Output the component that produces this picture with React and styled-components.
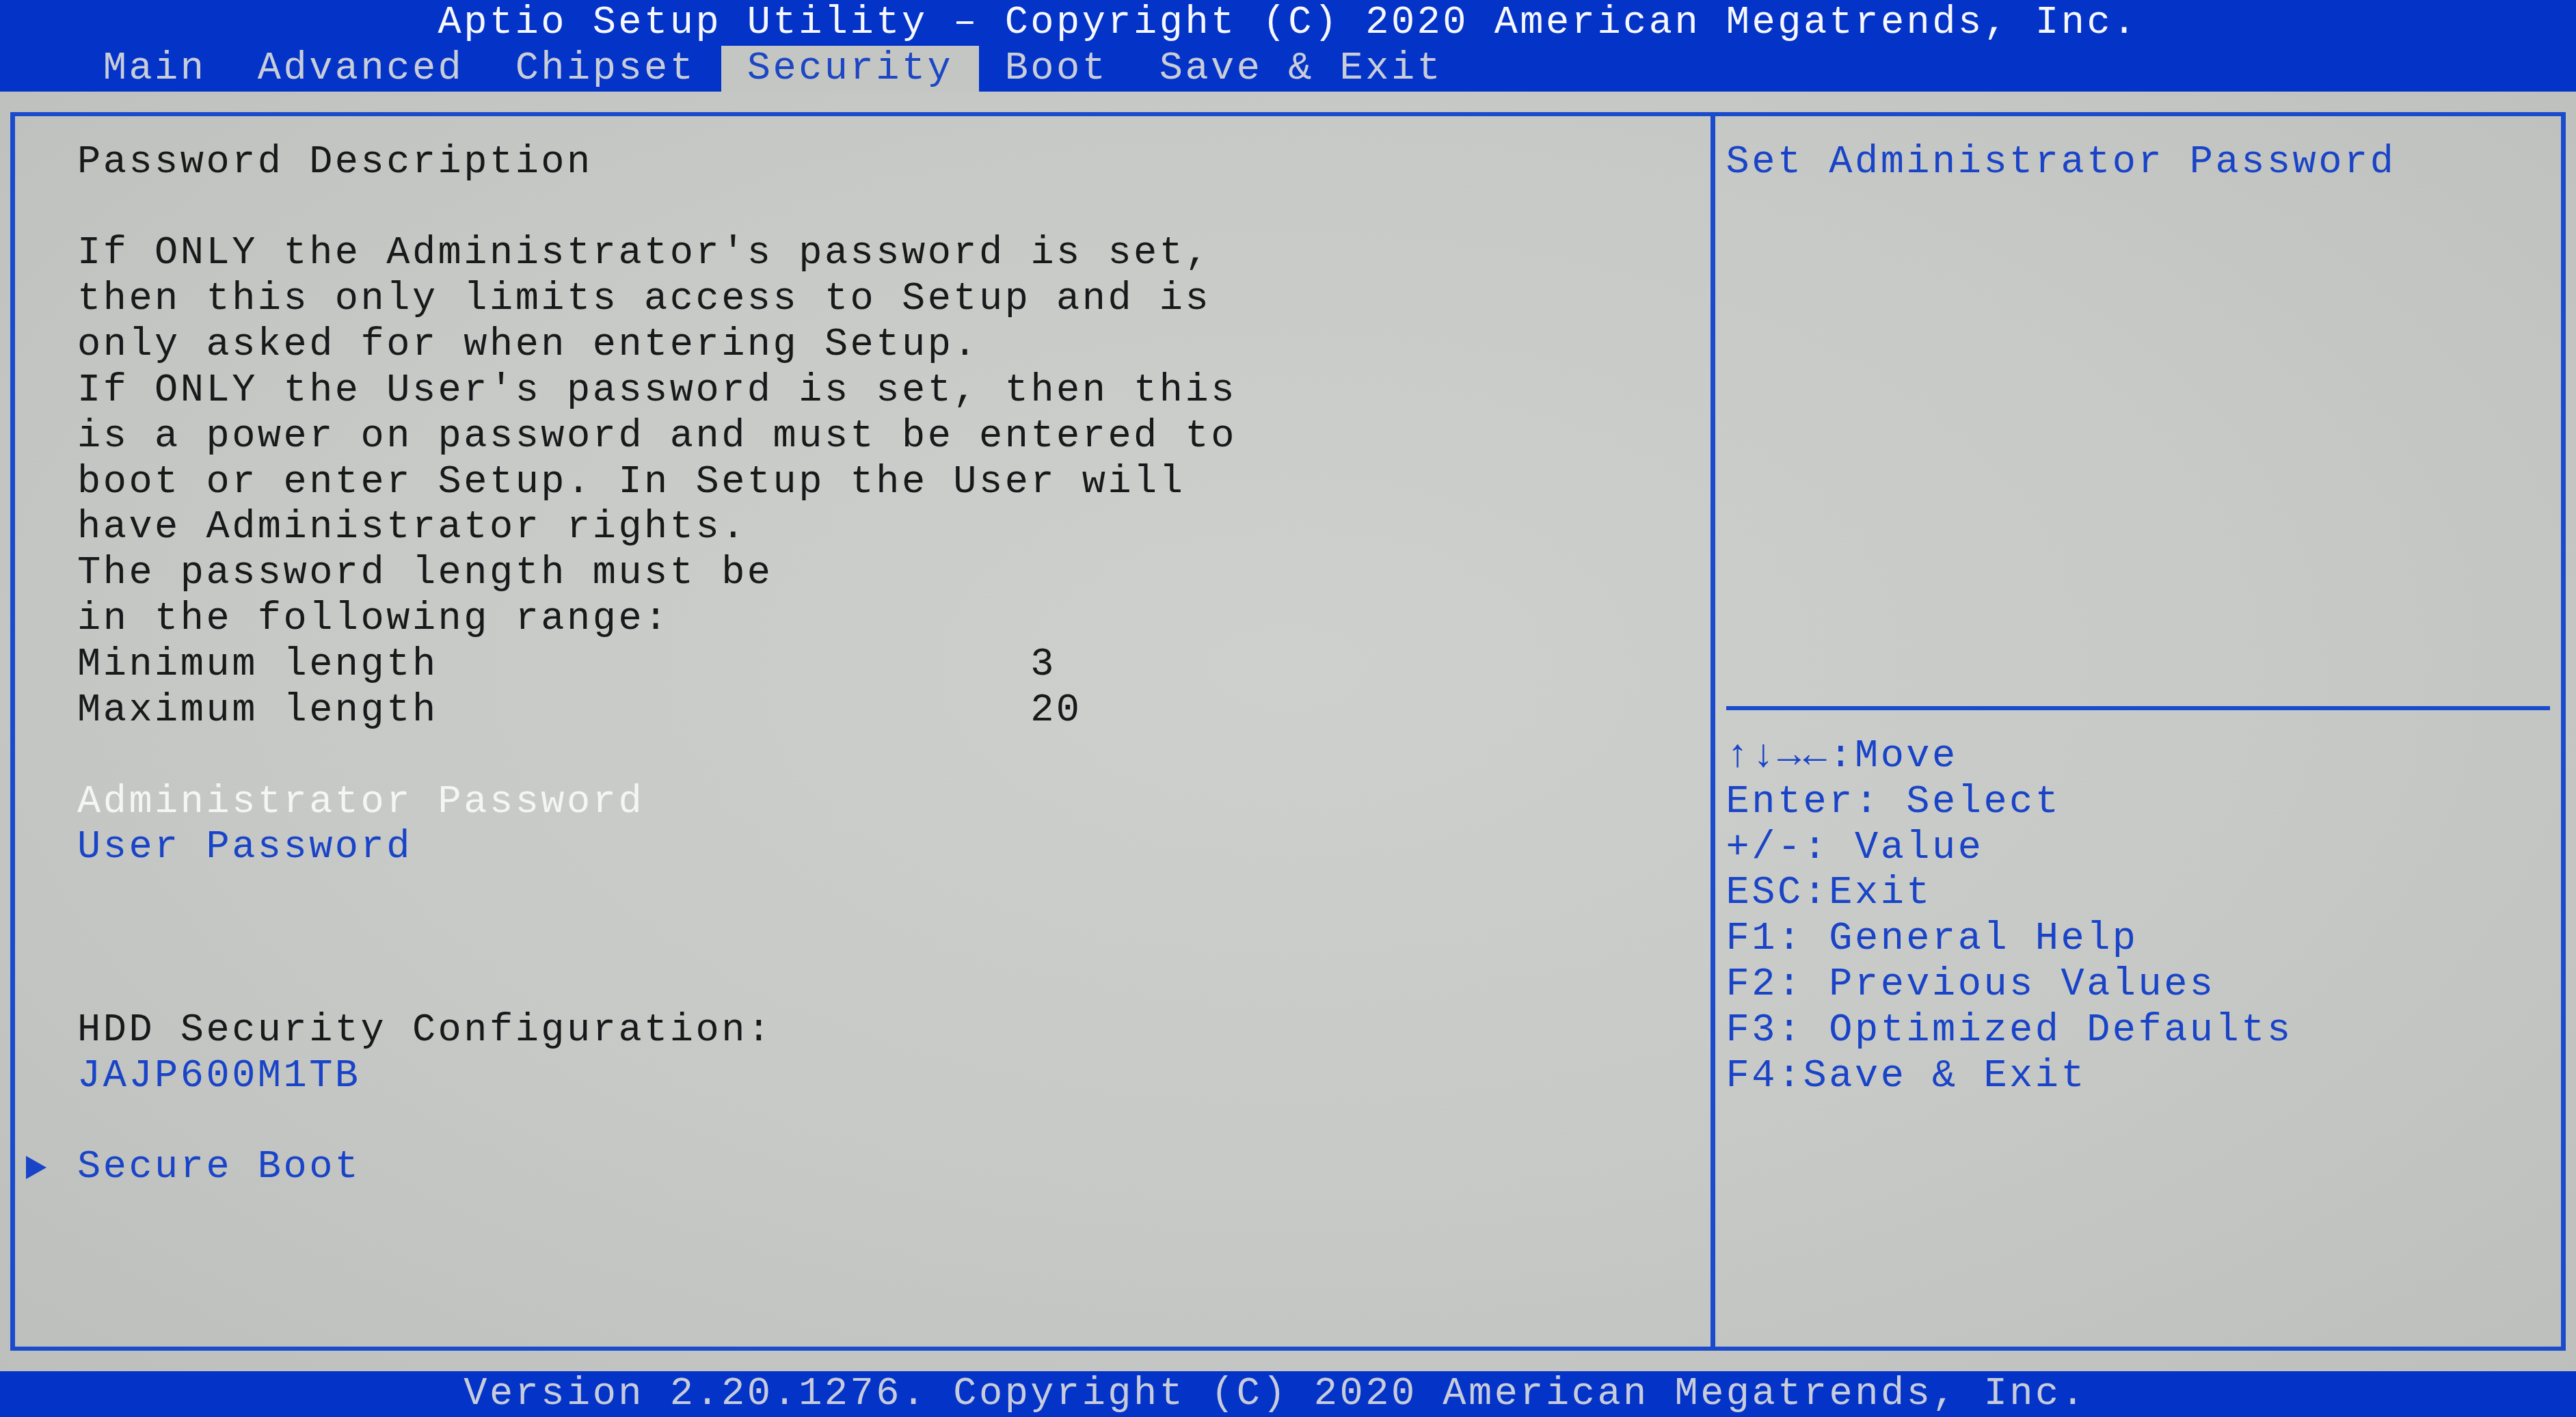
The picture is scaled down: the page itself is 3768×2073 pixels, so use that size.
import React from "react";
import styled, { createGlobalStyle } from "styled-components";

// text-mode grid: 100 columns x 31 rows
const CW = 3768 / 100;
const RH = 2073 / 31;
const VLINE = 7;
const HLINE = 6;
const EDGE = CW / 2 - VLINE / 2;

const GlobalStyle = createGlobalStyle`
	html, body {
		margin: 0;
		padding: 0;
		background: #c4c7c4;
		overflow: hidden;
	}
`;

const Screen = styled.div`
	width: 3768px;
	height: 2073px;
	display: flex;
	flex-direction: column;
	font-family: "Liberation Mono", "DejaVu Sans Mono", monospace;
	font-size: 57px;
	letter-spacing: ${CW - 57 * 0.6}px;
	white-space: pre;
`;

const Bar = styled.div`
	height: ${RH}px;
	line-height: ${RH}px;
	padding-left: ${(p) => p.$col * CW}px;
	background: #0434c7;
	color: ${(p) => p.$color};
	display: flex;
`;

const Tab = styled.div`
	padding: 0 ${CW}px;
	background: ${(p) => (p.$active ? "#c3c6c3" : "transparent")};
	color: ${(p) => (p.$active ? "#1c46c4" : "#c9cdd8")};
`;

const Body = styled.div`
	flex: 1;
	padding: ${RH / 2 - HLINE / 2}px ${EDGE}px;
	background: radial-gradient(
		ellipse at 50% 45%,
		#cdd0cd 0%,
		#c6c9c6 55%,
		#bcbfbc 100%
	);
	box-sizing: border-box;
`;

const Frame = styled.div`
	height: 100%;
	box-sizing: border-box;
	display: flex;
	border-style: solid;
	border-color: #1a4bcc;
	border-width: ${HLINE}px ${VLINE}px;
`;

const LeftPane = styled.div`
	width: ${66 * CW - VLINE}px;
	padding: ${RH / 2 - HLINE / 2}px 0 0 ${EDGE}px;
	box-sizing: border-box;
`;

const RightPane = styled.div`
	flex: 1;
	border-left: ${VLINE}px solid #1a4bcc;
	padding: ${RH / 2 - HLINE / 2}px 0 0 ${EDGE}px;
	box-sizing: border-box;
	display: flex;
	flex-direction: column;
`;

const tones = {
	black: "#171a1a",
	blue: "#1a44c8",
	white: "#f5f6f4",
};

const Row = styled.div`
	height: ${RH}px;
	line-height: ${RH + 6}px;
	display: flex;
	align-items: flex-start;
	color: ${(p) => tones[p.$tone || "black"]};
`;

const Marker = styled.div`
	width: ${2 * CW}px;
	height: ${RH}px;
	display: flex;
	align-items: center;
	flex-shrink: 0;
`;

const Arrow = styled.span`
	width: 0;
	height: 0;
	margin-top: 6px;
	border-left: 30px solid #1a44c8;
	border-top: 17px solid transparent;
	border-bottom: 17px solid transparent;
`;

const Label = styled.span`
	width: ${37 * CW}px;
	flex-shrink: 0;
`;

const Keys = styled.span`
	font-weight: bold;
`;

const HelpTop = styled.div`
	height: ${12 * RH}px;
`;

const Rule = styled.div`
	height: ${RH}px;
	display: flex;
	align-items: center;

	&::before {
		content: "";
		width: ${32 * CW}px;
		height: ${HLINE}px;
		background: #1a4bcc;
	}
`;

const tabs = ["Main", "Advanced", "Chipset", "Security", "Boot", "Save & Exit"];

const description = [
	"If ONLY the Administrator's password is set,",
	"then this only limits access to Setup and is",
	"only asked for when entering Setup.",
	"If ONLY the User's password is set, then this",
	"is a power on password and must be entered to",
	"boot or enter Setup. In Setup the User will",
	"have Administrator rights.",
	"The password length must be",
	"in the following range:",
];

const help = [
	"Enter: Select",
	"+/-: Value",
	"ESC:Exit",
	"F1: General Help",
	"F2: Previous Values",
	"F3: Optimized Defaults",
	"F4:Save & Exit",
];

const Line = ({ tone, arrow, children }) => (
	<Row $tone={tone}>
		<Marker>{arrow && <Arrow />}</Marker>
		{children}
	</Row>
);

const App = () => {
	return (
		<Screen>
			<GlobalStyle />
			<Bar $col={17} $color="#f6f7ff">
				Aptio Setup Utility – Copyright (C) 2020 American Megatrends, Inc.
			</Bar>
			<Bar $col={3}>
				{tabs.map((t) => (
					<Tab key={t} $active={t === "Security"}>
						{t}
					</Tab>
				))}
			</Bar>

			<Body>
				<Frame>
					<LeftPane>
						<Line>Password Description</Line>
						<Line />
						{description.map((d) => (
							<Line key={d}>{d}</Line>
						))}
						<Line>
							<Label>Minimum length</Label>3
						</Line>
						<Line>
							<Label>Maximum length</Label>20
						</Line>
						<Line />
						<Line tone="white">Administrator Password</Line>
						<Line tone="blue">User Password</Line>
						<Line />
						<Line />
						<Line />
						<Line>HDD Security Configuration:</Line>
						<Line tone="blue">JAJP600M1TB</Line>
						<Line />
						<Line tone="blue" arrow>
							Secure Boot
						</Line>
					</LeftPane>

					<RightPane>
						<HelpTop>
							<Row $tone="blue">Set Administrator Password</Row>
						</HelpTop>
						<Rule />
						<Row $tone="blue">
							<Keys>{"\u2191\u2193\u2192\u2190"}</Keys>:Move
						</Row>
						{help.map((h) => (
							<Row key={h} $tone="blue">
								{h}
							</Row>
						))}
					</RightPane>
				</Frame>
			</Body>

			<Bar $col={18} $color="#c8ccda">
				Version 2.20.1276. Copyright (C) 2020 American Megatrends, Inc.
			</Bar>
		</Screen>
	);
};

export default App;
